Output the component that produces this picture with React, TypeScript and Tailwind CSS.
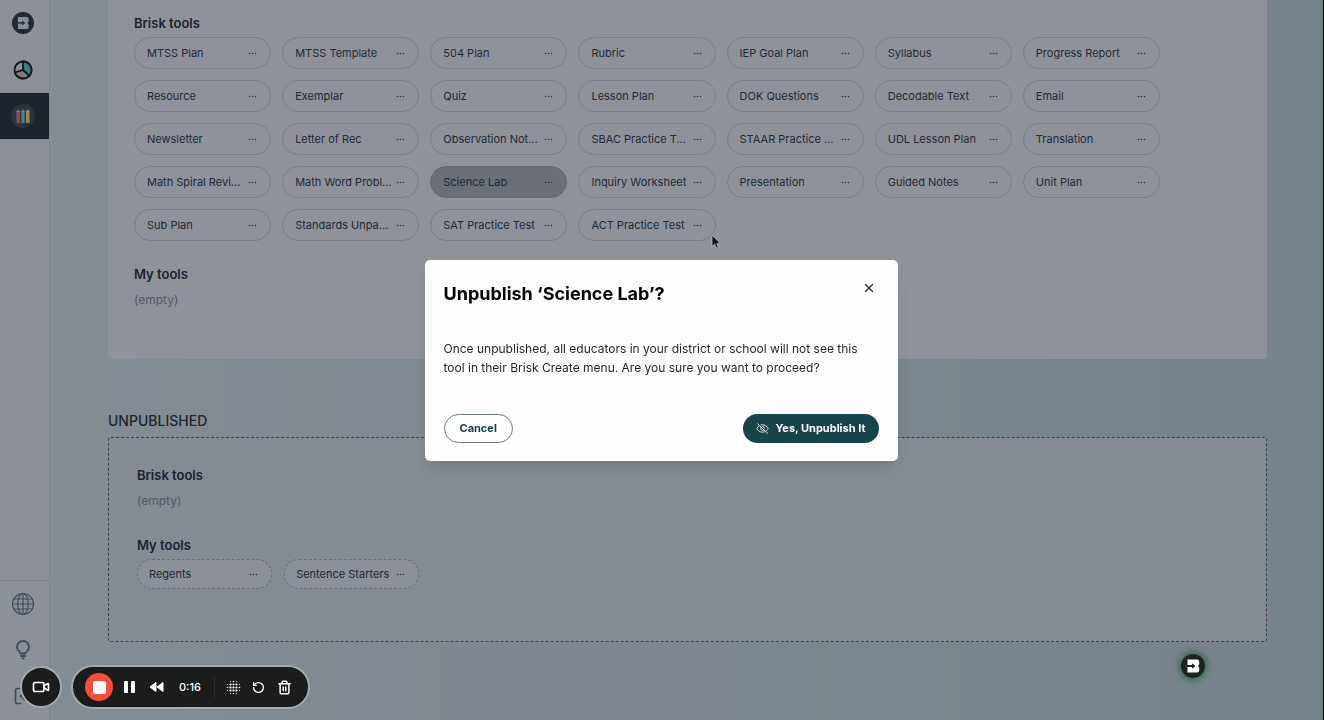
import type { ReactNode } from 'react';
import { LogIn, RotateCcw, Trash2, Video, X } from 'lucide-react';

const publishedTools = [
  'MTSS Plan', 'MTSS Template', '504 Plan', 'Rubric', 'IEP Goal Plan', 'Syllabus', 'Progress Report',
  'Resource', 'Exemplar', 'Quiz', 'Lesson Plan', 'DOK Questions', 'Decodable Text', 'Email',
  'Newsletter', 'Letter of Rec', 'Observation Not...', 'SBAC Practice T...', 'STAAR Practice ...', 'UDL Lesson Plan', 'Translation',
  'Math Spiral Revi...', 'Math Word Probl...', 'Science Lab', 'Inquiry Worksheet', 'Presentation', 'Guided Notes', 'Unit Plan',
  'Sub Plan', 'Standards Unpa...', 'SAT Practice Test', 'ACT Practice Test',
];

const unpublishedTools = ['Regents', 'Sentence Starters'];

function Dots() {
  return (
    <svg viewBox="0 0 9 3" className="h-[3px] w-[9px] shrink-0" fill="#2b313d">
      <circle cx="1.5" cy="1.5" r="0.8" />
      <circle cx="4.5" cy="1.5" r="0.8" />
      <circle cx="7.5" cy="1.5" r="0.8" />
    </svg>
  );
}

function ToolPill({ name, variant = 'default' }: { name: string; variant?: 'default' | 'selected' | 'dashed' }) {
  const look = {
    default: 'h-8 border-[#7b7e87] pl-3',
    selected: 'h-8 border-[#666a73] bg-[#6b6f78] pl-3',
    dashed: 'h-[30px] border-dashed border-[#686d76] bg-[#8c9099] pl-[11px]',
  }[variant];

  return (
    <button className={`${look} flex items-center justify-between rounded-full border pr-[13px] text-[11px] text-[#222835]`}>
      <span className="whitespace-nowrap">{name}</span>
      <Dots />
    </button>
  );
}

function BriskLogo({ className, disc, mark }: { className: string; disc: string; mark: string }) {
  return (
    <svg viewBox="0 0 24 24" className={className}>
      <circle cx="12" cy="12" r="12" fill={disc} />
      <path d="M6.500 5.500H16A2.200 2.200 0 0 1 18.200 7.700V10.200L17 12l1.200 1.800v2.500A2.200 2.200 0 0 1 16 18.500H6.500V13.200H5.800v-2.400h.7z" fill={mark} />
      <path d="M5.500 11.100h5.500V9.300l3.600 2.700-3.600 2.700v-1.800H5.500z" fill={disc} />
    </svg>
  );
}

function ChartIcon() {
  return (
    <svg viewBox="0 0 20 20" className="size-5" stroke="#11161e" strokeWidth="1.800">
      <circle cx="10" cy="10" r="8.500" fill="#8f929b" />
      <path d="M10 10V1.500A8.500 8.500 0 0 1 16.200 15.800z" fill="#3f7886" />
      <path d="M10 10l6.200 5.800A8.500 8.500 0 0 1 2 12.500z" fill="#7b7e86" />
    </svg>
  );
}

function PencilsIcon() {
  return (
    <svg viewBox="0 0 24 24" className="size-6">
      <circle cx="12" cy="12" r="12" fill="#2b343d" />
      <path d="M5.500 7L7 5.500h.6L9 7v12H5.500z" fill="#804d52" />
      <path d="M10.400 7l1.300-1.500h.6L13.600 7v12h-3.200z" fill="#4c7f8c" />
      <path d="M15 7l1.400-1.500h.6L18.500 7v12H15z" fill="#98855a" />
      <path d="M5.500 7h3.500v1H5.500zM10.400 7h3.200v1h-3.200zM15 7h3.500v1H15z" fill="#858a92" />
    </svg>
  );
}

function GlobeIcon() {
  return (
    <svg viewBox="0 0 24 24" className="size-6" fill="none" stroke="#414c5a" strokeWidth="1.200">
      <circle cx="12" cy="12" r="10.500" />
      <ellipse cx="12" cy="12" rx="5.200" ry="10.500" />
      <path d="M12 1.500v21M1.500 12h21M3 7h18M3 17h18" />
    </svg>
  );
}

function BulbIcon() {
  return (
    <svg viewBox="0 0 20 20" className="size-5" fill="none" stroke="#414c5a" strokeWidth="1.800" strokeLinecap="round">
      <path d="M7.500 13.500c0-1.500-3.500-2.800-3.500-6.500a6 6 0 0 1 12 0c0 3.700-3.500 5-3.500 6.500z" strokeLinejoin="round" />
      <path d="M7.800 16h4.400M9.300 18.300h1.400" />
    </svg>
  );
}

function HiddenIcon() {
  return (
    <svg viewBox="0 0 13 13" className="size-[13px]" fill="none" stroke="#dfe7e7" strokeWidth="1" strokeLinecap="round">
      <path d="M3 4C2 4.700 1.200 5.700.800 6.500c1 2.200 3.200 3.700 5.700 3.700.8 0 1.500-.1 2.200-.4M5 2.900c.5-.1 1-.1 1.500-.1 2.500 0 4.700 1.500 5.700 3.700-.4.900-1 1.600-1.800 2.200" />
      <path d="M5 5.200a2 2 0 0 0 2.800 2.800M6.800 4.500a2 2 0 0 1 1.700 1.700M1.500 1.800l10 9.400" />
    </svg>
  );
}

function Sidebar() {
  return (
    <nav className="flex w-[50px] shrink-0 flex-col border-r border-[#7f858e] bg-[#8c9098] pb-px">
      <a href="#home" aria-label="Home" className="flex h-[46px] items-center justify-center pr-1">
        <BriskLogo className="size-[22px]" disc="#242a33" mark="#8b8f98" />
      </a>
      <a href="#insights" aria-label="Insights" className="flex h-[47px] items-center justify-center pr-1">
        <ChartIcon />
      </a>
      <a href="#tools" aria-label="Tools" className="flex h-[46px] items-center justify-center bg-[#1d232c] pr-1">
        <PencilsIcon />
      </a>
      <div className="mt-auto flex flex-col border-t border-[#80858e]">
        <a href="#language" aria-label="Language" className="flex h-[46px] items-center justify-center pr-1">
          <GlobeIcon />
        </a>
        <a href="#help" aria-label="Help" className="flex h-[46px] items-center justify-center pr-1">
          <BulbIcon />
        </a>
        <a href="#logout" aria-label="Log out" className="flex h-[46px] items-center justify-center pr-1">
          <LogIn className="size-5 -scale-x-100 text-[#414c5a]" />
        </a>
      </div>
    </nav>
  );
}

function GroupTitle({ children }: { children: ReactNode }) {
  return <h3 className="text-[13px] leading-4 font-semibold text-[#1c222e]">{children}</h3>;
}

function ConfirmDialog() {
  return (
    <div className="fixed inset-0 flex items-center justify-center pr-0.5">
      <div role="dialog" aria-labelledby="dialog-title" className="w-[473px] rounded-[5px] bg-[#fdfefd] px-[19px] py-[18px] shadow-lg">
        <div className="flex items-start justify-between border-b border-[#fafafa] pb-3">
          <h2 id="dialog-title" className="pt-0.5 text-lg leading-7 font-bold text-black">Unpublish ‘Science Lab’?</h2>
          <button aria-label="Close" className="p-[3px] text-[#222]">
            <X className="size-[14px]" strokeWidth={2} />
          </button>
        </div>
        <p className="border-b border-[#f9fafa] py-[18px] text-xs leading-[19px] text-[#1d222b]">
          Once unpublished, all educators in your district or school will not see this tool in their Brisk Create menu. Are you sure you want to proceed?
        </p>
        <div className="flex items-center justify-between pt-[18px]">
          <button className="h-[29px] rounded-full border border-[#6e7b7e] px-[15px] text-[11px] font-bold text-[#153e42]">Cancel</button>
          <button className="flex h-[29px] items-center gap-[7px] rounded-full bg-[#174449] px-[13px] text-[11px] font-bold text-white">
            <HiddenIcon />
            Yes, Unpublish It
          </button>
        </div>
      </div>
    </div>
  );
}

function EffectsIcon() {
  const sizes = [
    [0, 0.6, 0.8, 0.6, 0],
    [0.6, 1.1, 1.1, 1.1, 0.6],
    [0.8, 1.1, 1.1, 1.1, 0.8],
    [0.6, 1.1, 1.1, 1.1, 0.6],
    [0, 0.6, 0.8, 0.6, 0],
  ];
  return (
    <svg viewBox="0 0 15 15" className="size-[15px]" fill="white">
      {sizes.map((row, y) => row.map((r, x) => <circle key={`${x}-${y}`} cx={1.5 + x * 3} cy={1.5 + y * 3} r={r} />))}
    </svg>
  );
}

function Recorder() {
  return (
    <div className="fixed bottom-[11px] left-5 flex items-center gap-[9px] text-white">
      <button aria-label="Camera" className="flex size-[42px] items-center justify-center rounded-full border-2 border-[#a4abb0] bg-[#1b1c1c]">
        <Video className="size-[18px]" strokeWidth={2.2} />
      </button>
      <div className="flex h-11 items-center rounded-full border-2 border-[#a4abb0] bg-[#1b1c1c] pr-4 pl-3">
        <button aria-label="Stop" className="flex size-7 items-center justify-center rounded-full bg-[#f2503b]">
          <span className="size-[13px] rounded-[2px] bg-white" />
        </button>
        <button aria-label="Pause" className="ml-[11px] flex gap-[3px]">
          <span className="h-3 w-1 rounded-[1px] bg-white" />
          <span className="h-3 w-1 rounded-[1px] bg-white" />
        </button>
        <button aria-label="Rewind" className="ml-[14px]">
          <svg viewBox="0 0 15 12" className="h-3 w-[15px]" fill="white" stroke="white" strokeLinejoin="round">
            <path d="M7 1.500v9L1 6zM14 1.500v9L8 6z" />
          </svg>
        </button>
        <time className="ml-[15px] w-[23px] text-[11px] leading-4 font-medium">0:16</time>
        <span className="ml-3 h-[22px] w-px bg-[#2c2e2e]" />
        <button aria-label="Effects" className="ml-[11px]">
          <EffectsIcon />
        </button>
        <button aria-label="Restart" className="ml-[11px]">
          <RotateCcw className="size-[13px]" strokeWidth={2.4} />
        </button>
        <button aria-label="Delete" className="ml-3">
          <Trash2 className="size-[15px]" strokeWidth={2.4} />
        </button>
      </div>
    </div>
  );
}

export default function App() {
  return (
    <div className="flex h-screen overflow-hidden border-r border-black bg-linear-to-r from-[#848d94] via-[#7e878f] to-[#75838a] font-['Inter','Liberation_Sans',sans-serif]">
      <Sidebar />
      <main className="min-w-0 flex-1 pr-14 pl-[58px]">
        <section className="rounded-b-[3px] bg-[#8f929b] px-[26px] pt-[15px] pb-[51px]">
          <GroupTitle>Brisk tools</GroupTitle>
          <div className="mt-1.5 grid max-w-[1026px] grid-cols-7 gap-[11px]">
            {publishedTools.map((name) => (
              <ToolPill key={name} name={name} variant={name === 'Science Lab' ? 'selected' : 'default'} />
            ))}
          </div>
          <div className="mt-[25px]">
            <GroupTitle>My tools</GroupTitle>
            <p className="mt-2.5 text-xs leading-4 text-[#535964]">(empty)</p>
          </div>
        </section>

        <section className="mt-[52px]">
          <h2 className="text-sm leading-5 font-medium text-[#1e2531]">UNPUBLISHED</h2>
          <div className="mt-1.5 rounded-[3px] border border-dashed border-[#36414d] bg-[#848b93] px-7 pt-[29px] pb-[52px]">
            <GroupTitle>Brisk tools</GroupTitle>
            <p className="mt-2.5 text-xs leading-4 text-[#515a64]">(empty)</p>
            <div className="mt-7">
              <GroupTitle>My tools</GroupTitle>
              <div className="mt-1.5 grid max-w-[1018px] grid-cols-7 gap-3">
                {unpublishedTools.map((name) => (
                  <ToolPill key={name} name={name} variant="dashed" />
                ))}
              </div>
            </div>
          </div>
        </section>
      </main>

      <ConfirmDialog />
      <Recorder />

      <button aria-label="Open Brisk" className="fixed right-[119px] bottom-[42px] rounded-full shadow-[0_0_6px_2px_#2f6b45]">
        <BriskLogo className="size-6" disc="#1d2322" mark="#ffffff" />
      </button>

      <svg viewBox="0 0 10 15" className="fixed top-[234px] left-[711px] h-[15px] w-2.5" aria-hidden="true">
        <path d="M1 1v11.500l2.700-2.400 1.700 4 2-.9-1.700-3.800h3.500z" fill="#0b0d10" stroke="#b9bcc2" strokeWidth="0.800" />
      </svg>
    </div>
  );
}
